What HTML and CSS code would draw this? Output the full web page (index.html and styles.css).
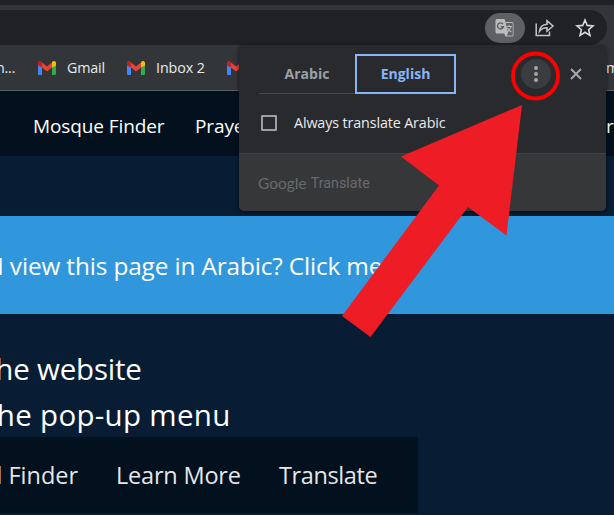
FILE: index.html
```html
<!DOCTYPE html>
<html lang="en">
<head>
<meta charset="utf-8">
<title>Translate page</title>
<link rel="stylesheet" href="styles.css">
</head>
<body>
<svg class="defs" width="0" height="0" aria-hidden="true">
  <symbol id="gmail" viewBox="0 0 18 14">
    <path fill="#4285f4" d="M0 3.5h4V14H1.3A1.3 1.3 0 0 1 0 12.7z"/>
    <path fill="#34a853" d="M14 3.5h4v9.2a1.3 1.3 0 0 1-1.3 1.3H14z"/>
    <path fill="#ea4335" d="M4 1.5 9 5.4 14 1.5V6.6L9 10.5 4 6.6z"/>
    <path fill="#c5221f" d="M0 4.2V2C0 .2 1.9-.6 3.3.4L4 1v5.6L0 4.6z"/>
    <path fill="#fbbc04" d="M18 4.2V2c0-1.8-1.9-2.6-3.3-1.6L14 1v5.6l4-2z"/>
  </symbol>
</svg>
<div class="screen">
  <div class="tabstrip"></div>
  <div class="toolbar">
    <div class="omnibox">
      <span class="chip">
        <svg width="20" height="20" viewBox="0 0 20 20">
          <path fill="#b9bbbd" d="M2 1h7.500l1 3H17a1.500 1.500 0 0 1 1.500 1.500v11.500a1.500 1.500 0 0 1-1.500 1.500h-6.500l-1.300-3H2A1.500 1.500 0 0 1 .5 14V2.500A1.500 1.500 0 0 1 2 1z"/>
          <path fill="#5f6063" d="M10.800 5H17a.7.7 0 0 1 .7.7v11a.7.7 0 0 1-.7.700h-5.500l1.600-1.900z"/>
          <path fill="none" stroke="#5f6063" stroke-width="1.400" d="M8 6.200A3 3 0 1 0 8.400 8.800H5.700"/>
          <path fill="none" stroke="#b9bbbd" stroke-width="1.100" d="M11.500 8.500h5.500M14.200 7v1.500M16 8.500c-.5 2.500-2 4-3.700 5.200M12.500 10c.8 1.800 2.300 3.200 4 4"/>
        </svg>
      </span>
      <svg class="share" width="20" height="18" viewBox="0 0 20 18">
        <path fill="none" stroke="#c4c6c8" stroke-width="1.500" d="M1.200 4.500v12h13.300v-4M4.500 12.300c.5-4.300 3-6.700 7.500-7V1.700l6 5.300-6 5.200V8.800c-3.500 0-5.700 1-7.500 3.500z"/>
      </svg>
      <svg class="star" width="20" height="19" viewBox="0 0 20 19">
        <path fill="none" stroke="#d5d7d9" stroke-width="1.600" d="M10 2l2.200 5.400 5.800.5-4.400 3.800 1.400 5.700-5-3.100-5 3.100 1.400-5.700L2 7.900l5.800-.5z"/>
      </svg>
    </div>
  </div>
  <div class="bookmarks">
    <span class="bm bm-cut">n...</span>
    <svg class="gm" width="18" height="14"><use href="#gmail"/></svg>
    <span class="bm bm-gmail">Gmail</span>
    <svg class="gm" width="18" height="14"><use href="#gmail"/></svg>
    <span class="bm bm-inbox">Inbox 2</span>
    <svg class="gm" width="18" height="14"><use href="#gmail"/></svg>
    <span class="bm bm-end">m</span>
  </div>
  <nav class="nav">
    <span class="nav-mosque">Mosque Finder</span>
    <span class="nav-prayer">Prayer</span>
    <span class="nav-end">re</span>
  </nav>
  <div class="band"></div>
  <div class="banner"><span>I view this page in Arabic? Click me</span></div>
  <div class="steps">
    <p class="step one">the website</p>
    <p class="step two">the pop-up menu</p>
  </div>
  <div class="subnav">
    <span class="s1">d Finder</span>
    <span class="s2">Learn More</span>
    <span class="s3">Translate</span>
  </div>

  <section class="popup">
    <div class="popup-top">
      <div class="tabs">
        <span class="tab arabic">Arabic</span>
        <span class="tab english">English</span>
        <span class="more"><i></i><i></i><i></i></span>
        <svg class="close" width="12" height="12" viewBox="0 0 12 12"><path stroke="#a3a7ab" stroke-width="2" d="M1 1l10 10M11 1L1 11"/></svg>
      </div>
      <div class="always"><span class="box"></span><span class="label">Always translate Arabic</span></div>
    </div>
    <div class="popup-foot"><span class="google">Google</span><span class="translate">Translate</span></div>
  </section>
  <svg class="annotation" width="614" height="515" viewBox="0 0 614 515">
    <circle cx="535.500" cy="76" r="22.500" fill="none" stroke="#fe0000" stroke-width="3.800"/>
    <path fill="#ee1c25" d="M522 105 401 156.500 439 185.500 342 316 370.500 337 468 207 506.500 235.500z"/>
  </svg>
</div>
</body>
</html>
```

FILE: styles.css
```css
* { box-sizing: border-box; }
body { margin: 0; background: #081d34; font-family: "Open Sans", "Noto Sans", sans-serif; color: #fff; }
.defs { position: absolute; }
.screen { position: relative; width: 614px; height: 515px; overflow: hidden; white-space: nowrap; }
.tabstrip { height: 5px; background: #202124; }
.toolbar { height: 40px; padding: 5px 7px 0 0; background: #323639; }
.omnibox { display: flex; align-items: center; height: 35px; padding: 0 12px 0 485px; background: #202124; border-radius: 0 18px 18px 0; }
.chip { display: flex; flex: none; align-items: center; justify-content: center; width: 40px; height: 30px; border-radius: 15px; background: #5f6063; }
.share { flex: none; margin-left: 10px; }
.star { flex: none; margin-left: 20px; }
.bookmarks { display: flex; align-items: center; height: 45px; background: #323639; font-size: 14.3px; color: #e8eaed; }
.bm { flex: none; line-height: 20px; }
.bm-cut { width: 38px; margin: 0 4px 0 -4px; letter-spacing: -.2px; }
.gm { flex: none; }
.bm-gmail { width: 71px; padding-left: 11px; letter-spacing: -.15px; }
.bm-inbox { width: 82px; padding-left: 11px; letter-spacing: -.1px; }
.bm-end { margin-left: 361px; }
.nav { display: flex; align-items: center; height: 66px; border-top: 1px solid #5b5f63; padding: 4px 0 0 33px; background: #03111f; font-size: 19px; letter-spacing: -.1px; }
.nav span { flex: none; }
.nav-mosque { width: 162px; }
.nav-prayer { width: 411px; }
.band { height: 60px; }
.banner { height: 98px; padding: 33px 0 0; background: #3097dc; font-size: 24.4px; line-height: 34px; letter-spacing: -.15px; }
.banner span { display: block; margin-left: -3px; }
.steps { height: 123px; padding-top: 32px; }
.step { margin: 0; height: 46px; line-height: 46px; font-size: 29.5px; }
.one { margin-left: -15px; letter-spacing: -.2px; }
.two { margin-left: -14px; letter-spacing: .3px; }
.subnav { display: flex; align-items: center; width: 418px; height: 76px; padding-bottom: 1px; background: #03101d; color: #e4e6e9; font-size: 23.5px; }
.s1 { width: 128px; margin-left: -12px; }
.s2 { width: 163px; letter-spacing: -.2px; }
.s3 { letter-spacing: -.4px; }
.popup { position: absolute; left: 239px; top: 45px; width: 367px; height: 166px; overflow: hidden; border-radius: 5px; background: #292a2d; box-shadow: 0 1px 4px rgba(0,0,0,.6); }
.popup-top { height: 108px; padding: 9px 0 0 20px; }
.tabs { display: flex; align-items: center; height: 40px; font-size: 14px; font-weight: 700; }
.tab { display: flex; align-items: center; justify-content: center; height: 40px; }
.arabic { width: 96px; border-bottom: 1px solid #47484b; color: #9aa0a6; }
.english { width: 101px; padding-bottom: 2px; border: 2px solid #8ab4f8; color: #8ab4f8; }
.more { display: flex; flex-direction: column; align-items: center; justify-content: center; gap: 2px; width: 30px; height: 30px; margin-left: 65px; border-radius: 50%; background: #3b3c3f; }
.more i { width: 4px; height: 4px; border-radius: 50%; background: #a3a7ab; }
.close { margin-left: 19px; }
.always { display: flex; align-items: center; height: 57px; padding-left: 2px; font-size: 14.3px; letter-spacing: -.12px; color: #e8eaed; }
.box { width: 16px; height: 16px; border: 2px solid #9aa0a6; border-radius: 1px; }
.label { margin-left: 17px; }
.popup-foot { display: flex; align-items: center; gap: 4px; height: 58px; padding-left: 19px; border-top: 1px solid #424346; background: #363739; color: #686b6f; font-size: 14.3px; }
.google { font-family: Lato, sans-serif; font-size: 15.5px; }
.translate { font-family: Roboto, sans-serif; }
.annotation { position: absolute; left: 0; top: 0; }
```
